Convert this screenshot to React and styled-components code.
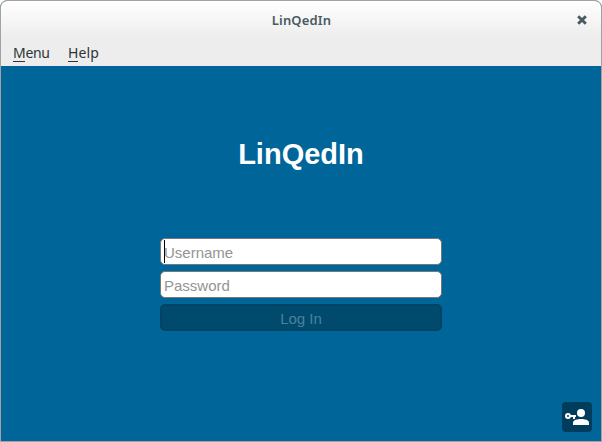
import React from "react";
import styled, { createGlobalStyle } from "styled-components";

const GlobalStyle = createGlobalStyle`
  * { box-sizing: border-box; }
  body { margin: 0; background: #fff; overflow: hidden; }
`;

const Window = styled.div`
  width: 602px;
  height: 442px;
  display: flex;
  flex-direction: column;
  border: 1px solid #a3a1a1;
  border-radius: 7px 7px 0 0;
  overflow: hidden;
  background: #006699;
`;

const Header = styled.header`
  flex: 0 0 65px;
  background: linear-gradient(#ffffff 0, #ededed 36px, #ededed 100%);
  font-family: "Noto Sans", sans-serif;
`;

const TitleBar = styled.div`
  height: 38px;
  display: grid;
  grid-template-columns: 40px 1fr 40px;
  align-items: center;
`;

const Title = styled.h1`
  margin: 0;
  padding-left: 1px;
  text-align: center;
  font-size: 13px;
  line-height: 18px;
  font-weight: 600;
  letter-spacing: 0.15px;
  color: #4a5a60;
`;

const CloseButton = styled.button`
  width: 10px;
  height: 10px;
  padding: 0;
  border: 0;
  margin-left: 16px;
  background: none;
  display: flex;
`;

const MenuBar = styled.nav`
  height: 27px;
  display: flex;
  gap: 18px;
  padding: 4px 0 0 12px;
`;

const MenuItem = styled.span`
  width: ${(p) => p.$width}px;
  font-size: 14px;
  line-height: 19px;
  white-space: nowrap;
  letter-spacing: ${(p) => p.$spacing}px;
  color: #2e3436;
`;

const Mnemonic = styled.span`
  display: inline-block;
  height: 19px;
  border-bottom: 1px solid #2e3436;
`;

const Content = styled.main`
  flex: 1;
  display: flex;
  flex-direction: column;
  align-items: center;
  font-family: "Liberation Sans", Arial, sans-serif;
`;

const Brand = styled.h2`
  margin: 71px 0 67px;
  height: 34px;
  font-size: 29px;
  line-height: 34px;
  font-weight: 700;
  color: #fff;
`;

const Form = styled.form`
  width: 282px;
  display: flex;
  flex-direction: column;
  gap: 6px;
`;

const Field = styled.div`
  height: 27px;
  display: flex;
  align-items: center;
  padding: 2px 3px 0;
  border: 1px solid #77777a;
  border-radius: 5px;
  background: #fff;
  font-size: 15px;
  line-height: 20px;
  color: #929595;
`;

const Caret = styled.span`
  width: 1px;
  height: 23px;
  margin: -2px -1px 0 0;
  background: #000;
`;

const LoginButton = styled.button`
  height: 27px;
  padding: 2px 0 0;
  border: 2px solid #004364;
  border-radius: 5px;
  background: #004b6d;
  font: 15px/20px "Liberation Sans", Arial, sans-serif;
  color: #4c819a;
`;

const Footer = styled.footer`
  align-self: flex-end;
  margin: auto 9px 9px 0;
`;

const AdminButton = styled.button`
  width: 30px;
  height: 30px;
  padding: 0;
  border: 0;
  border-radius: 4px;
  background: #003d5c;
  display: flex;
`;

export default function App() {
  return (
    <>
      <GlobalStyle />
      <Window>
        <Header>
          <TitleBar>
            <span />
            <Title>LinQedIn</Title>
            <CloseButton aria-label="Close">
              <svg width="10" height="10" viewBox="0 0 10 10">
                <path d="M2.200 2.200 7.800 7.800M7.800 2.200 2.200 7.800" stroke="#4a5a60" strokeWidth="2.900" strokeLinecap="square" />
              </svg>
            </CloseButton>
          </TitleBar>
          <MenuBar>
            <MenuItem $width={37} $spacing={-0.3}><Mnemonic>M</Mnemonic>enu</MenuItem>
            <MenuItem $width={32} $spacing={0.1}><Mnemonic>H</Mnemonic>elp</MenuItem>
          </MenuBar>
        </Header>
        <Content>
          <Brand>LinQedIn</Brand>
          <Form>
            <Field><Caret />Username</Field>
            <Field>Password</Field>
            <LoginButton type="button" disabled>Log In</LoginButton>
          </Form>
          <Footer>
            <AdminButton aria-label="Administrator login">
              <svg width="30" height="30" viewBox="0 0 30 30" fill="#fff">
                <circle cx="19" cy="10.900" r="4" />
                <path d="M11 23v-2.200C11 18 15.500 17 19 17s8 1 8 3.800V23z" />
                <circle cx="6" cy="14" r="2" fill="none" stroke="#fff" strokeWidth="2" />
                <path d="M8 13h6v2h-1v2h-2v-2H8z" />
              </svg>
            </AdminButton>
          </Footer>
        </Content>
      </Window>
    </>
  );
}
